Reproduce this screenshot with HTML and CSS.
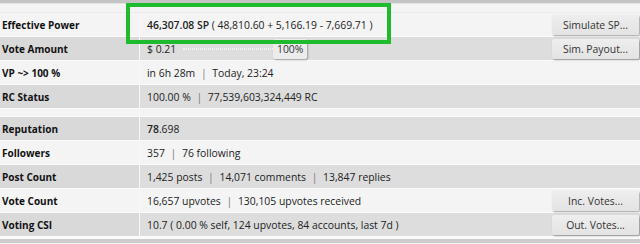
FILE: index.html
```html
<!DOCTYPE html>
<html lang="en">
<head>
    <meta charset="UTF-8">
    <title>Account Stats</title>
    <link rel="stylesheet" href="styles.css">
</head>
<body>
    <div class="panel">
        <div class="top-edge"></div>
        <table class="stats">
            <tr class="pad"><td colspan="3"></td></tr>
            <tr class="light">
                <td class="label">Effective Power</td>
                <td class="value"><b>46,307.08 SP</b> ( 48,810.60 + 5,166.19 - 7,669.71 )</td>
                <td class="action"><button class="btn">Simulate SP...</button></td>
            </tr>
            <tr class="dark">
                <td class="label">Vote Amount</td>
                <td class="value">
                    <div class="slider">
                        <span>$ 0.21</span>
                        <div class="track"><span class="handle">100%</span></div>
                    </div>
                </td>
                <td class="action"><button class="btn">Sim. Payout...</button></td>
            </tr>
            <tr class="light">
                <td class="label">VP ~&gt; 100 %</td>
                <td class="value">in 6h 28m <span class="sep">|</span> Today, 23:24</td>
                <td class="action"></td>
            </tr>
            <tr class="dark">
                <td class="label">RC Status</td>
                <td class="value">100.00 % <span class="sep">|</span> 77,539,603,324,449 RC</td>
                <td class="action"></td>
            </tr>
            <tr class="gap light"><td class="label"></td><td class="value"></td><td class="action"></td></tr>
            <tr class="dark">
                <td class="label">Reputation</td>
                <td class="value"><b>78</b>.698</td>
                <td class="action"></td>
            </tr>
            <tr class="light">
                <td class="label">Followers</td>
                <td class="value">357 <span class="sep">|</span> 76 following</td>
                <td class="action"></td>
            </tr>
            <tr class="dark">
                <td class="label">Post Count</td>
                <td class="value">1,425 posts <span class="sep">|</span> 14,071 comments <span class="sep">|</span> 13,847 replies</td>
                <td class="action"></td>
            </tr>
            <tr class="light">
                <td class="label">Vote Count</td>
                <td class="value">16,657 upvotes <span class="sep">|</span> 130,105 upvotes received</td>
                <td class="action"><button class="btn">Inc. Votes...</button></td>
            </tr>
            <tr class="dark">
                <td class="label">Voting CSI</td>
                <td class="value">10.7 ( 0.00 % self, 124 upvotes, 84 accounts, last 7d )</td>
                <td class="action"><button class="btn">Out. Votes...</button></td>
            </tr>
        </table>
        <div class="bottom-edge"></div>
        <div class="highlight"></div>
    </div>
</body>
</html>
```

FILE: styles.css
```css
* {
    margin: 0;
    padding: 0;
    box-sizing: border-box;
}

body {
    font-family: "Open Sans", "Liberation Sans", sans-serif;
    font-size: 10.4px;
    color: #222;
    background: #f4f4f4;
}

.panel {
    position: relative;
    width: 640px;
}

.top-edge {
    height: 4px;
    background: #c4c4c4;
    border-bottom: 1px solid #e2e2e2;
}

.stats {
    width: 100%;
    border-collapse: separate;
    border-spacing: 0;
}

.stats td {
    height: 24px;
    border-bottom: 1px solid #fbfbfb;
    vertical-align: middle;
}

.stats .pad td {
    height: 9px;
    border-bottom: 1px solid #ebebeb;
}

.stats .gap td {
    height: 8px;
}

.light td { background: #f4f4f4; }
.dark td { background: #dddddd; }
.dark .label { background: #d9d9d9; }

.label {
    width: 140px;
    padding-left: 2px;
    font-size: 10px;
    font-weight: 700;
    color: #111;
    border-right: 1px solid #f8f8f8;
    white-space: nowrap;
}

.value {
    padding-left: 7px;
    white-space: nowrap;
}

.value b {
    font-weight: 600;
}

.sep {
    color: #777;
    margin: 0 3px;
}

.action {
    width: 100px;
    text-align: right;
    padding-right: 1px;
}

.btn {
    font-family: inherit;
    font-size: 10.4px;
    color: #333;
    width: 87px;
    height: 20px;
    border: none;
    border-radius: 2px;
    background: linear-gradient(#eeeeee, #e3e3e3);
    box-shadow: 1px 1px 2px rgba(0, 0, 0, 0.35);
    cursor: pointer;
}

.slider {
    display: flex;
    align-items: center;
}

.track {
    position: relative;
    width: 124px;
    height: 2px;
    margin-left: 7px;
    border-top: 1px dotted #f2f2f2;
    border-bottom: 1px dotted #f2f2f2;
}

.handle {
    position: absolute;
    right: 0;
    top: -10px;
    width: 34px;
    height: 20px;
    line-height: 20px;
    text-align: center;
    background: #ececec;
    border-radius: 2px;
    box-shadow: 1px 1px 2px rgba(0, 0, 0, 0.3);
    color: #333;
}

.bottom-edge {
    height: 6px;
    border-top: 2px solid #fafafa;
    background: #cdcdcd;
}

.highlight {
    position: absolute;
    left: 126px;
    top: 3px;
    width: 265px;
    height: 41px;
    border: 4px solid #1fbb2e;
}
```
